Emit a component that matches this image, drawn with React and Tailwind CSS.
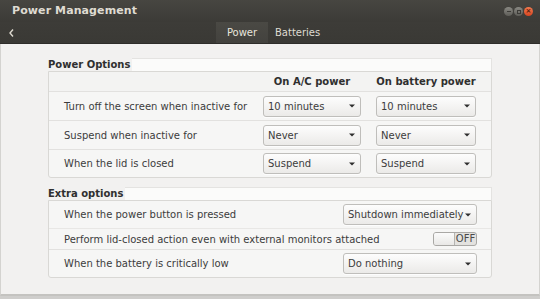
import React from "react";

const font = { fontFamily: '"DejaVu Sans", "Liberation Sans", sans-serif' };

const Arrow = () => (
  <svg width="6" height="4" viewBox="0 0 6 4" className="shrink-0">
    <path d="M0 0.5 L6 0.5 L3 3.5 Z" fill="#2e2e2e" />
  </svg>
);

const Combo = ({ value, w }) => (
  <div
    className={`${w} h-[21px] flex items-center justify-between pl-[4px] pr-[5px] rounded-[3px] border border-[#bfbebb] bg-gradient-to-b from-[#fdfdfd] to-[#ebeae8] shadow-[0_1px_0_rgba(255,255,255,0.8)] text-[10px] text-[#3c3c3c]`}
  >
    <span className="whitespace-nowrap">{value}</span>
    <Arrow />
  </div>
);

const SectionTitle = ({ children }) => (
  <div className="flex h-[13px] items-stretch">
    <p className="pr-[2px] text-[10px] font-bold leading-[13px] text-[#2f2f2f]">{children}</p>
    <div className="flex-1 bg-[#fbfbfa] border-t border-r border-[#e4e3e1]" />
  </div>
);

const PowerRow = ({ label, ac, bat, h = "h-[29px]", last }) => (
  <div className={`grid grid-cols-[214px_113px_1fr] items-center ${h} ${last ? "" : "border-b border-[#e2e1df]"}`}>
    <p className="pl-[15px] text-[10px] text-[#3c3c3c]">{label}</p>
    <Combo value={ac} w="w-[98px]" />
    <Combo value={bat} w="w-[100px]" />
  </div>
);

export default function App() {
  return (
    <div style={font} className="w-[540px] h-[299px] bg-[#cfcecc] overflow-hidden">
      {/* title bar */}
      <div className="h-[22px] flex items-center justify-between bg-gradient-to-b from-[#474641] to-[#3c3b37] pl-[12px] pr-[7px]">
        <p className="text-[11px] font-bold text-[#dfdbd2] tracking-[0.1px]">Power Management</p>
        <div className="flex items-center gap-[1px] pt-[1px]">
          <span className="w-[9px] h-[9px] rounded-full bg-gradient-to-b from-[#8a8983] to-[#5e5d58] flex items-center justify-center">
            <span className="w-[4px] h-[1px] bg-[#3c3b37]" />
          </span>
          <span className="w-[9px] h-[9px] rounded-full bg-gradient-to-b from-[#8a8983] to-[#5e5d58] flex items-center justify-center">
            <span className="w-[4px] h-[4px] border border-[#3c3b37]" />
          </span>
          <span className="w-[9px] h-[9px] rounded-full bg-gradient-to-b from-[#f37a4f] to-[#d6441f] flex items-center justify-center text-[7px] leading-none text-[#5a1f0e] font-bold">
            ×
          </span>
        </div>
      </div>

      {/* toolbar */}
      <div className="h-[22px] flex items-stretch bg-gradient-to-b from-[#3d3c38] to-[#3a3935] border-b border-[#2e2d2a]">
        <div className="w-[22px] flex items-center justify-center">
          <svg width="5" height="8" viewBox="0 0 5 8">
            <path d="M4 0.5 L1 4 L4 7.5" fill="none" stroke="#dcd8cf" strokeWidth="1.4" />
          </svg>
        </div>
        <div className="w-[194px]" />
        <div className="w-[52px] flex items-center justify-center bg-gradient-to-b from-[#4a4944] to-[#43423e] text-[10px] text-[#e8e5de]">
          Power
        </div>
        <div className="pl-[7px] flex items-center text-[10px] text-[#dfdbd2]">Batteries</div>
      </div>

      {/* content */}
      <div className="h-[252px] bg-[#f2f1f0] border-l border-r border-[#d4d3d0] border-b-2 border-b-[#c4c3c0] pt-[14px] pl-[47px]">
        <div className="w-[444px]">
          <SectionTitle>Power Options</SectionTitle>
          <div className="bg-[#f6f6f5] border border-[#d9d8d5] rounded-b-[3px]">
            <div className="grid grid-cols-[214px_113px_1fr] items-center h-[20px] border-b border-[#e2e1df] bg-[#f3f3f2]">
              <span />
              <p className="w-[98px] text-center text-[10px] font-bold text-[#2f2f2f] whitespace-nowrap">On A/C power</p>
              <p className="w-[100px] text-center text-[10px] font-bold text-[#2f2f2f] whitespace-nowrap">On battery power</p>
            </div>
            <PowerRow label="Turn off the screen when inactive for" ac="10 minutes" bat="10 minutes" />
            <PowerRow label="Suspend when inactive for" ac="Never" bat="Never" />
            <PowerRow label="When the lid is closed" ac="Suspend" bat="Suspend" h="h-[27px]" last />
          </div>

          <div className="h-[9px]" />
          <SectionTitle>Extra options</SectionTitle>
          <div className="bg-[#f6f6f5] border border-[#d9d8d5] rounded-b-[3px]">
            <div className="flex items-center justify-between h-[28px] pl-[15px] pr-[14px] border-b border-[#e8e7e5]">
              <p className="text-[10px] text-[#3c3c3c]">When the power button is pressed</p>
              <Combo value="Shutdown immediately" w="w-[134px]" />
            </div>
            <div className="flex items-center justify-between h-[21px] pl-[15px] pr-[14px] border-b border-[#e2e1df]">
              <p className="text-[10px] text-[#3c3c3c]">Perform lid-closed action even with external monitors attached</p>
              <div className="w-[44px] h-[14px] flex rounded-[3px] border border-[#a9a8a5] overflow-hidden bg-[#e3e2df]">
                <div className="w-[21px] bg-gradient-to-b from-[#fbfbfb] to-[#e9e8e6] border-r border-[#b5b4b1]" />
                <div className="flex-1 flex items-center justify-center text-[10px] leading-none text-[#4a4a4a]">OFF</div>
              </div>
            </div>
            <div className="flex items-center justify-between h-[27px] pl-[15px] pr-[14px]">
              <p className="text-[10px] text-[#3c3c3c]">When the battery is critically low</p>
              <Combo value="Do nothing" w="w-[134px]" />
            </div>
          </div>
        </div>
      </div>
    </div>
  );
}
